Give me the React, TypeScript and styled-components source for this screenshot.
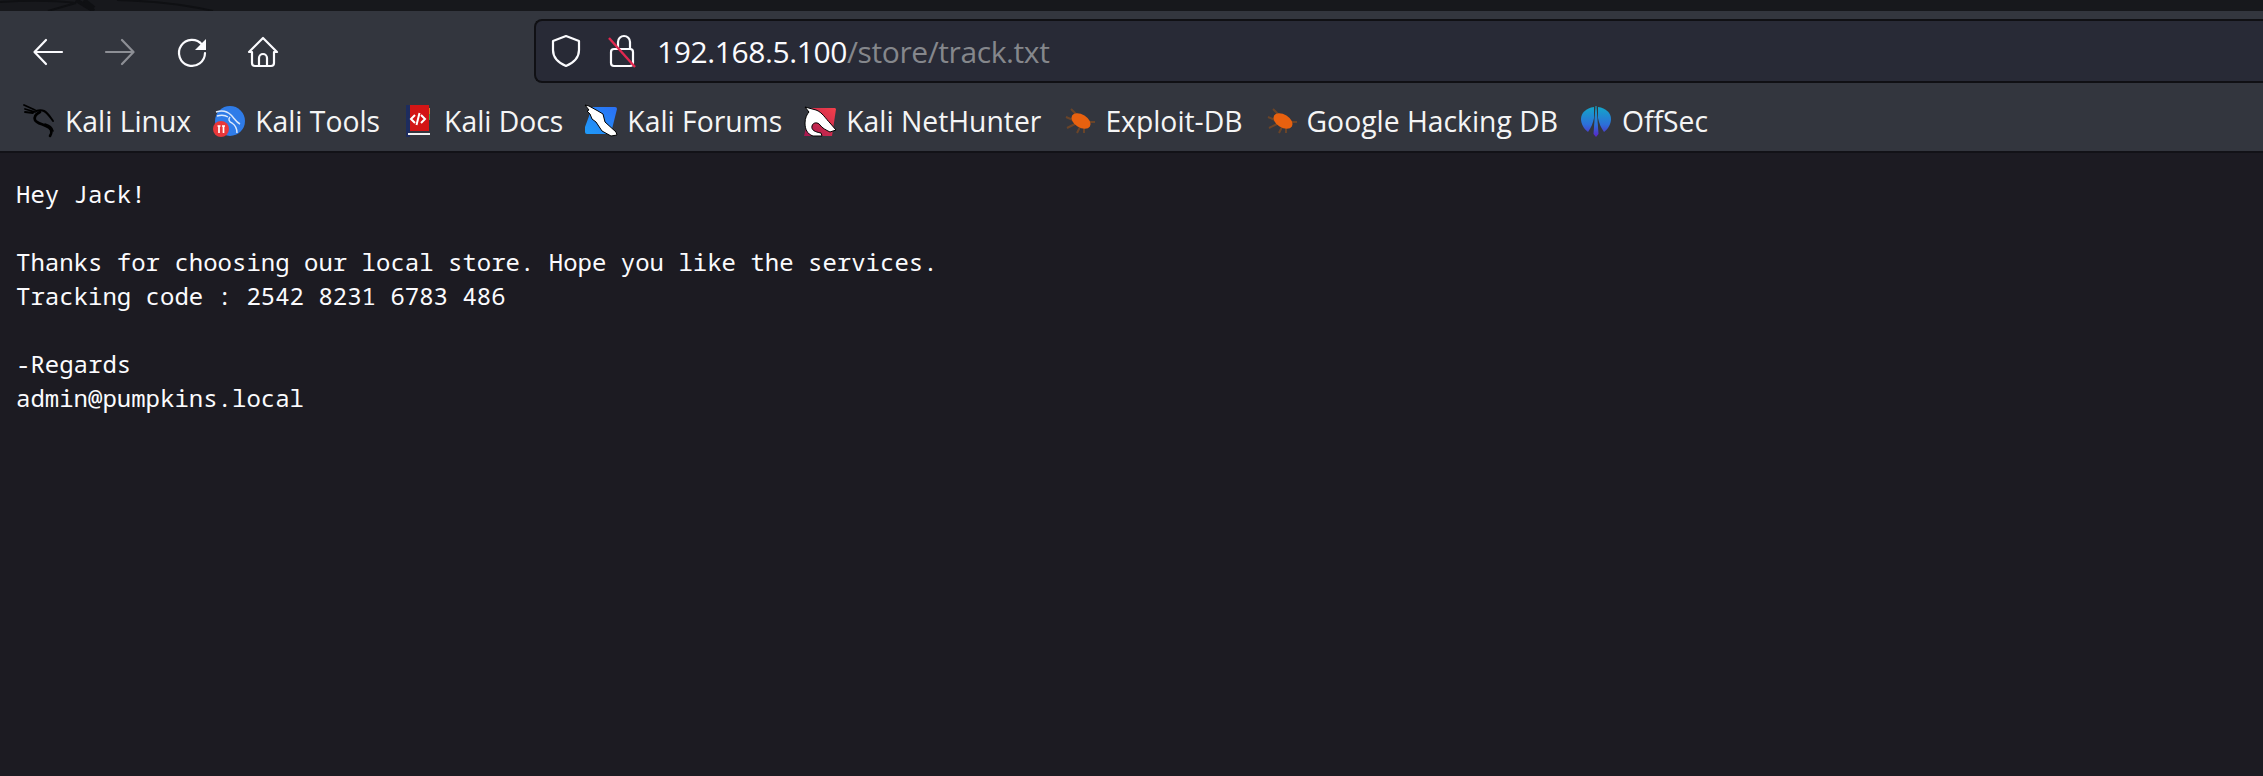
import styled, { createGlobalStyle } from 'styled-components';

const GlobalStyle = createGlobalStyle`
    html, body {
        margin: 0;
        padding: 0;
        background: #1c1b22;
    }
`;

const Wrapper = styled.div`
    width: 2263px;
    height: 776px;
    overflow: hidden;
    display: flex;
    flex-direction: column;
`;

const TitleStrip = styled.div`
    height: 11px;
    background: #17181c;
    flex: none;
    overflow: hidden;
    svg { display: block; }
`;

const Chrome = styled.div`
    flex: none;
    height: 140px;
    background: #33363e;
    border-bottom: 2px solid #121217;
    display: flex;
    flex-direction: column;
`;

const NavRow = styled.div`
    height: 80px;
    flex: none;
    display: flex;
    align-items: center;
    padding: 8px 0 8px 32px;
    box-sizing: border-box;
`;

const NavButton = styled.div<{ $dim?: boolean }>`
    flex: none;
    width: 32px;
    height: 32px;
    margin-right: 40px;
    opacity: ${p => (p.$dim ? 0.45 : 1)};
    &:nth-child(4) { margin-right: 0; }
    svg { display: block; overflow: visible; }
`;

const UrlBar = styled.div`
    margin-left: 254px;
    flex: 1;
    height: 64px;
    box-sizing: border-box;
    background: #282a36;
    border: 2px solid #101014;
    border-right: none;
    border-radius: 8px 0 0 8px;
    display: flex;
    align-items: center;
    padding-left: 15px;
`;

const UrlIcons = styled.div`
    display: flex;
    align-items: center;
    gap: 27px;
    margin-right: 21px;
    svg { display: block; flex: none; }
`;

const UrlText = styled.div`
    font-family: "Open Sans", "Noto Sans", sans-serif;
    font-size: 30px;
    color: #fbfbfe;
    white-space: nowrap;
    letter-spacing: -0.4px;
    span { color: #85878c; }
`;

const BookmarkRow = styled.div`
    flex: 1;
    display: flex;
    align-items: center;
    padding-left: 23px;
`;

const Bookmark = styled.div`
    display: flex;
    align-items: center;
    margin-right: 22px;
    font-family: "Open Sans", "Noto Sans", sans-serif;
    font-size: 28.3px;
    color: #f5f5f5;
    white-space: nowrap;
`;

const FavIcon = styled.span`
    flex: none;
    width: 32px;
    height: 32px;
    margin-right: 10px;
    display: flex;
    align-items: center;
    justify-content: center;
    svg { display: block; overflow: visible; }
`;

const Page = styled.pre`
    margin: 0;
    padding: 24px 16px;
    flex: 1;
    background: #1c1b22;
    color: #fbfbfe;
    font-family: "Noto Sans Mono", "DejaVu Sans Mono", monospace;
    font-size: 24px;
    line-height: 34px;
`;

function Fly() {
    return (
        <svg width="32" height="32" viewBox="0 0 32 32">
            <g stroke="#7d4a22" strokeWidth="2" fill="none" opacity="0.75">
                <path d="M8 4l6 6M3 12l7 3M4 23l8-4M24 17h8M14 28l3-6M21 28l0-5" />
            </g>
            <ellipse cx="18" cy="16" rx="10.500" ry="6.500" transform="rotate(32 18 16)" fill="#e8610f" />
        </svg>
    );
}

const bookmarks = [
    {
        label: 'Kali Linux',
        icon: (
            <svg width="32" height="32" viewBox="0 0 32 32" fill="none" stroke="#000" strokeLinecap="round" strokeLinejoin="round">
                <path d="M1 0l11 5M2 4l10 3M2 7l8 1" strokeWidth="1.800" />
                <path d="M13 6c3-1 6-1 8 0 4 2 6 6 9 10" strokeWidth="2" />
                <path d="M17 7c-4 2-6 5-5 8 1 3 7 4 11 6 5 2 7 5 4 10" strokeWidth="2.600" />
                <path d="M22 19c4 1 7 3 8 7" strokeWidth="1.600" />
            </svg>
        ),
    },
    {
        label: 'Kali Tools',
        icon: (
            <svg width="32" height="32" viewBox="0 0 32 32">
                <circle cx="17" cy="16" r="15" fill="#2f7ce8" />
                <path d="M3 7c6-2 11-1 15 3 3 3 5 7 9 9M4 11c4-1 8-1 11 1M17 12c-2 2-1 5 2 6 3 2 5 5 5 10" stroke="#dce9fb" strokeWidth="1.500" fill="none" />
                <circle cx="8" cy="24" r="8" fill="#e8373a" />
                <path d="M4.500 21h3M6 21v7M9 21h3M10.500 21v7" stroke="#fff" strokeWidth="1.700" />
            </svg>
        ),
    },
    {
        label: 'Kali Docs',
        icon: (
            <svg width="24" height="32" viewBox="0 0 24 32">
                <rect x="0" y="0" width="4" height="32" fill="#1d2c5e" />
                <rect x="4" y="0" width="19" height="26" fill="#d31515" />
                <rect x="23" y="3" width="1" height="6" fill="#d9822b" />
                <rect x="23" y="9" width="1" height="6" fill="#4c9a4c" />
                <rect x="2" y="28" width="22" height="2" fill="#f2f2f2" />
                <path d="M9 10l-4 4 4 4M15 10l4 4-4 4M13.500 8l-3 12" stroke="#fff" strokeWidth="2" fill="none" />
            </svg>
        ),
    },
    {
        label: 'Kali Forums',
        icon: (
            <svg width="32" height="32" viewBox="0 0 32 32">
                <defs>
                    <linearGradient id="forum" x1="1" y1="0" x2="0" y2="1">
                        <stop offset="0" stopColor="#2b6ff5" />
                        <stop offset="1" stopColor="#1f9bf8" />
                    </linearGradient>
                </defs>
                <path d="M9 2h21a2 2 0 0 1 2 2l-6 24a2 2 0 0 1-2 1H2a2 2 0 0 1-2-2V22L7 3a2 2 0 0 1 2-1z" fill="url(#forum)" />
                <path d="M0 0l4 1 9 5 5 3 2 8 11 10 1 3-6 1-9-5-6-9-4-3-2-5-3-3 2-1z" fill="#fff" stroke="#000" strokeWidth="1" strokeLinejoin="round" />
            </svg>
        ),
    },
    {
        label: 'Kali NetHunter',
        icon: (
            <svg width="32" height="32" viewBox="0 0 32 32">
                <defs>
                    <linearGradient id="hunter" x1="1" y1="0" x2="0" y2="1">
                        <stop offset="0" stopColor="#f5404a" />
                        <stop offset="1" stopColor="#a3174f" />
                    </linearGradient>
                </defs>
                <path d="M7 3h24l1 1-4 27H0z" fill="url(#hunter)" />
                <path d="M1 2l11 3c6 2 10 9 14 13l6 7-6 2c-4-2-8-4-10-7-2-3-7-3-8 1-1 4 3 6 9 7l1 3H9c-6-2-8-7-8-13 0-5 2-9 4-11z" fill="#fff" stroke="#000" strokeWidth="1" strokeLinejoin="round" />
            </svg>
        ),
    },
    { label: 'Exploit-DB', icon: <Fly /> },
    { label: 'Google Hacking DB', icon: <Fly /> },
    {
        label: 'OffSec',
        icon: (
            <svg width="32" height="32" viewBox="0 0 32 32">
                <defs>
                    <linearGradient id="off" gradientUnits="userSpaceOnUse" x1="0" y1="1" x2="0" y2="32">
                        <stop offset="0" stopColor="#12a9c9" />
                        <stop offset="0.6" stopColor="#2c6fd8" />
                        <stop offset="1" stopColor="#5a22c8" />
                    </linearGradient>
                </defs>
                <path d="M14 2C6 3 1 8 1 14c0 5 3 10 7 13 3-4 5-9 6-14z" fill="url(#off)" />
                <path d="M18 2c8 1 13 6 13 12 0 5-3 10-7 13-3-4-5-9-6-14z" fill="url(#off)" />
                <path d="M15.500 1h1l2 28-2.500 3-2.500-3z" fill="url(#off)" />
            </svg>
        ),
    },
];

export default function App() {
    return (
        <Wrapper>
            <GlobalStyle />
            <TitleStrip>
                <svg width="320" height="11" viewBox="0 0 320 11" fill="none" stroke="#0f1013">
                    <path d="M0 2C30 0 60 1 76 3L48 11" strokeWidth="2" />
                    <path d="M76 0l18 11M84 0l10 8" strokeWidth="4" />
                    <path d="M117 0c35 1 70 5 96 11" strokeWidth="2" />
                </svg>
            </TitleStrip>
            <Chrome>
                <NavRow>
                    <NavButton>
                        <svg width="32" height="32" viewBox="0 0 32 32" fill="none" stroke="#fbfbfe" strokeWidth="2.200" strokeLinecap="round" strokeLinejoin="round">
                            <path d="M30 17H3M14 5L2.500 17 14 29" />
                        </svg>
                    </NavButton>
                    <NavButton $dim>
                        <svg width="32" height="32" viewBox="0 0 32 32" fill="none" stroke="#fbfbfe" strokeWidth="2.200" strokeLinecap="round" strokeLinejoin="round">
                            <path d="M2 17h27M18 5l11.500 12L18 29" />
                        </svg>
                    </NavButton>
                    <NavButton>
                        <svg width="32" height="32" viewBox="0 0 32 32" fill="none">
                            <path d="M26 9.600A13 13 0 1 0 29 18" stroke="#fbfbfe" strokeWidth="2.200" strokeLinecap="round" />
                            <path d="M30 4v11H19z" fill="#fbfbfe" />
                        </svg>
                    </NavButton>
                    <NavButton>
                        <svg width="32" height="32" viewBox="0 0 32 32" fill="none" stroke="#fbfbfe" strokeWidth="2.200" strokeLinejoin="round" strokeLinecap="round">
                            <path d="M1 17L15 3l14 14h-3v11a3 3 0 0 1-3 3H7a3 3 0 0 1-3-3V17z" />
                            <path d="M11 31v-8a4 4 0 0 1 8 0v8" />
                        </svg>
                    </NavButton>
                    <UrlBar>
                        <UrlIcons>
                            <svg width="30" height="34" viewBox="0 0 30 34" fill="none" stroke="#fbfbfe" strokeWidth="2.200" strokeLinejoin="round">
                                <path d="M15 2l13 5v9c0 8-6 13-13 16C8 29 2 24 2 16V7z" />
                            </svg>
                            <svg width="28" height="34" viewBox="0 0 28 34" fill="none">
                                <path d="M10 14V8a6 6 0 0 1 12 0v7" stroke="#fbfbfe" strokeWidth="2.200" />
                                <rect x="3" y="15" width="22" height="17" rx="3" stroke="#fbfbfe" strokeWidth="2.200" />
                                <path d="M1 4l26 29" stroke="#e22850" strokeWidth="2.400" />
                            </svg>
                        </UrlIcons>
                        <UrlText>192.168.5.100<span>/store/track.txt</span></UrlText>
                    </UrlBar>
                </NavRow>
                <BookmarkRow>
                    {bookmarks.map(b => (
                        <Bookmark key={b.label}>
                            <FavIcon>{b.icon}</FavIcon>
                            {b.label}
                        </Bookmark>
                    ))}
                </BookmarkRow>
            </Chrome>
            <Page>{`Hey Jack!

Thanks for choosing our local store. Hope you like the services.
Tracking code : 2542 8231 6783 486

-Regards
admin@pumpkins.local`}</Page>
        </Wrapper>
    );
}
